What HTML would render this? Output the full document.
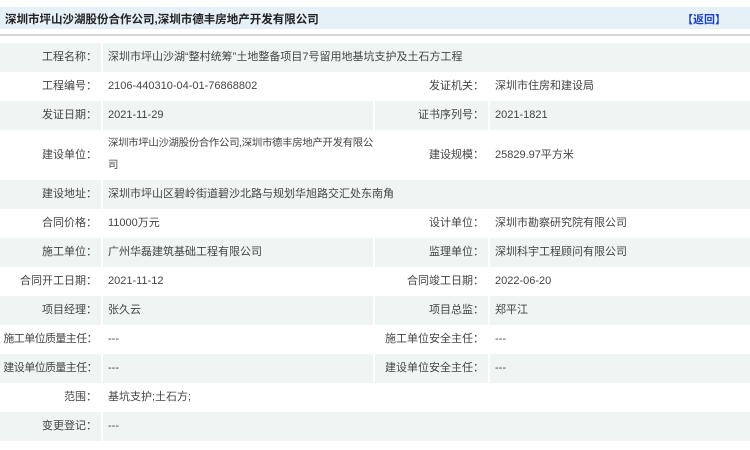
<!DOCTYPE html>
<html><head><meta charset="utf-8"><style>
*{margin:0;padding:0;box-sizing:border-box}
body{width:750px;height:450px;background:#fff;font-family:"Liberation Sans","Noto Sans CJK SC",sans-serif;font-size:11px;color:#444;position:relative;overflow:hidden}
.hd{position:absolute;left:0;top:7px;width:750px;height:22px;background:#e6f0f7;}
.hd .t{position:absolute;left:5px;top:4px;font-weight:bold;font-size:11.5px;color:#222}
.hd .r{position:absolute;right:24px;top:4px;color:#1a3fc4;font-weight:bold;font-size:11px}
.ln{position:absolute;left:0;top:34px;width:750px;height:2px;background:#d6d6d6}
table{position:absolute;left:0;top:43px;width:750px;border-collapse:collapse;table-layout:fixed}
td{height:29px;border:1px solid #fff;border-width:0 2px 0 0;padding:0;vertical-align:middle;line-height:15px;white-space:nowrap;overflow:hidden}
tr.s td{background:#eef5f2}
td.l{text-align:right;padding-right:4px}
td.v{padding-left:5px}
td:last-child{border-right:0}
.n{letter-spacing:-0.6px}
</style></head><body>
<div class="hd"><div class="t">深圳市坪山沙湖股份合作公司,深圳市德丰房地产开发有限公司</div><div class="r">【返回】</div></div>
<div class="ln"></div>
<table>
<colgroup><col style="width:102px"><col style="width:272px"><col style="width:115px"><col></colgroup>
<tr class="s"><td class="l">工程名称：</td><td class="v" colspan="3">深圳市坪山沙湖“整村统筹”土地整备项目7号留用地基坑支护及土石方工程</td></tr>
<tr><td class="l">工程编号：</td><td class="v">2106-440310-04-01-76868802</td><td class="l">发证机关：</td><td class="v">深圳市住房和建设局</td></tr>
<tr class="s"><td class="l">发证日期：</td><td class="v">2021-11-29</td><td class="l">证书序列号：</td><td class="v">2021-1821</td></tr>
<tr><td class="l" style="height:50px">建设单位：</td><td class="v" style="line-height:22px;font-size:10.4px;letter-spacing:-0.3px">深圳市坪山沙湖股份合作公司,深圳市德丰房地产开发有限公<br>司</td><td class="l">建设规模：</td><td class="v">25829.97平方米</td></tr>
<tr class="s"><td class="l">建设地址：</td><td class="v" colspan="3">深圳市坪山区碧岭街道碧沙北路与规划华旭路交汇处东南角</td></tr>
<tr><td class="l">合同价格：</td><td class="v">11000万元</td><td class="l">设计单位：</td><td class="v">深圳市勘察研究院有限公司</td></tr>
<tr class="s"><td class="l">施工单位：</td><td class="v">广州华磊建筑基础工程有限公司</td><td class="l">监理单位：</td><td class="v">深圳科宇工程顾问有限公司</td></tr>
<tr><td class="l">合同开工日期：</td><td class="v">2021-11-12</td><td class="l">合同竣工日期：</td><td class="v">2022-06-20</td></tr>
<tr class="s"><td class="l">项目经理：</td><td class="v">张久云</td><td class="l">项目总监：</td><td class="v">郑平江</td></tr>
<tr><td class="l n">施工单位质量主任：</td><td class="v">---</td><td class="l">施工单位安全主任：</td><td class="v">---</td></tr>
<tr class="s"><td class="l n">建设单位质量主任：</td><td class="v">---</td><td class="l">建设单位安全主任：</td><td class="v">---</td></tr>
<tr><td class="l">范围：</td><td class="v" colspan="3">基坑支护;土石方;</td></tr>
<tr class="s"><td class="l">变更登记：</td><td class="v" colspan="3">---</td></tr>
</table>
</body></html>
